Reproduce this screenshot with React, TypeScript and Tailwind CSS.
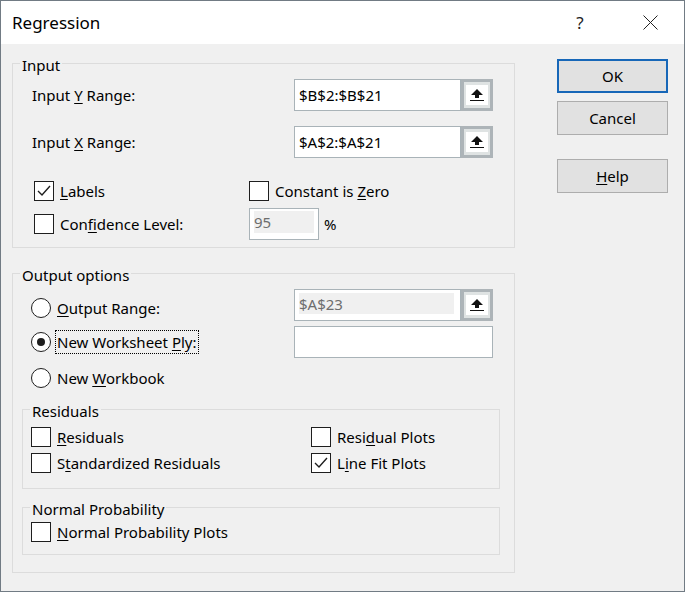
import React from "react";

function U({ children }: { children: React.ReactNode }) {
  return <span className="underline decoration-1 underline-offset-[2px]">{children}</span>;
}

function Check({ checked = false }: { checked?: boolean }) {
  return (
    <span className="flex h-[20px] w-[20px] shrink-0 items-center justify-center border border-[#1e1e1e] bg-white">
      {checked && (
        <svg width="18" height="18" viewBox="0 0 18 18">
          <path d="M3 9 L7 13 L15 4" fill="none" stroke="#1e1e1e" strokeWidth="1.4" />
        </svg>
      )}
    </span>
  );
}

function Radio({ on = false }: { on?: boolean }) {
  return (
    <span className="flex h-[20px] w-[20px] shrink-0 items-center justify-center rounded-full border-[1.5px] border-[#1e1e1e] bg-white">
      {on && <span className="h-[8px] w-[8px] rounded-full bg-[#1e1e1e]" />}
    </span>
  );
}

function PickButton() {
  return (
    <span className="flex h-[32px] w-[32px] shrink-0 items-center justify-center border-[3px] border-[#adb4b8] bg-[#dfe3e3]">
      <span className="flex h-[20px] w-[22px] items-center justify-center bg-white">
        <svg width="14" height="14" viewBox="0 0 14 14">
          <path d="M7 1 L13 7 L9 7 L9 10 L5 10 L5 7 L1 7 Z" fill="#111" />
          <rect x="0" y="12" width="14" height="1" fill="#111" />
        </svg>
      </span>
    </span>
  );
}

function RangeBox({ value, disabled = false }: { value: string; disabled?: boolean }) {
  return (
    <span className="flex h-[32px] w-[199px] shrink-0">
      {disabled ? (
        <span className="flex w-[167px] border border-[#a9b3b8] bg-white pb-[6px] pl-[4px] pr-[6px] pt-[3px]">
          <span className="flex flex-1 items-center bg-[#f0f0f0] text-[#6d6d6d]">{value}</span>
        </span>
      ) : (
        <span className="flex w-[167px] items-center border border-[#a9b3b8] bg-white pl-[4px] text-black">
          {value}
        </span>
      )}
      <PickButton />
    </span>
  );
}

function Group({
  title,
  className,
  children,
}: {
  title: string;
  className: string;
  children: React.ReactNode;
}) {
  return (
    <fieldset className={`m-0 border border-[#dcdcdc] p-0 ${className}`}>
      <legend className="ml-[7px] px-[2px] pt-[4px] text-[15px] leading-[20px]">{title}</legend>
      {children}
    </fieldset>
  );
}

function DlgButton({
  children,
  primary = false,
  className = "",
}: {
  children: React.ReactNode;
  primary?: boolean;
  className?: string;
}) {
  return (
    <button
      className={`flex h-[34px] w-[111px] items-center justify-center bg-[#e1e1e1] text-[15px] text-black ${
        primary ? "border-2 border-[#1767b8]" : "border border-[#adadad]"
      } ${className}`}
    >
      {children}
    </button>
  );
}

export default function App() {
  return (
    <div className="flex h-[592px] w-[685px] flex-col border border-[#717b84] bg-[#f0f0f0] font-['Noto_Sans',sans-serif] text-[15px] leading-[20px] text-black">
      {/* title bar */}
      <div className="flex h-[43px] items-center bg-white pl-[11px] pr-[19px]">
        <span className="text-[17px]">Regression</span>
        <span className="ml-auto flex w-[30px] justify-center text-[17px] text-[#222]">?</span>
        <span className="ml-[40px] flex w-[30px] justify-center">
          <svg width="15" height="15" viewBox="0 0 15 15">
            <path d="M0.5 0.5 L14.5 14.5 M14.5 0.5 L0.5 14.5" stroke="#222" strokeWidth="1" />
          </svg>
        </span>
      </div>

      <div className="flex flex-1 pl-[11px] pt-[7px]">
        <div className="flex w-[503px] flex-col">
          <Group title="Input" className="w-[503px]">
            <div className="pb-[7px] pl-[19px] pt-[4px]">
              <div className="flex h-[32px] items-center">
                <span className="w-[262px]">
                  Input <U>Y</U> Range:
                </span>
                <RangeBox value="$B$2:$B$21" />
              </div>
              <div className="mt-[15px] flex h-[32px] items-center">
                <span className="w-[262px]">
                  Input <U>X</U> Range:
                </span>
                <RangeBox value="$A$2:$A$21" />
              </div>
              <div className="mt-[23px] flex h-[20px] items-center pl-[2px]">
                <span className="flex w-[215px] items-center gap-[6px]">
                  <Check checked />
                  <span>
                    <U>L</U>abels
                  </span>
                </span>
                <span className="flex items-center gap-[6px]">
                  <Check />
                  <span>
                    Constant is <U>Z</U>ero
                  </span>
                </span>
              </div>
              <div className="mt-[7px] flex h-[32px] items-center pl-[2px]">
                <span className="flex w-[215px] items-center gap-[6px]">
                  <Check />
                  <span>
                    Con<U>f</U>idence Level:
                  </span>
                </span>
                <span className="flex h-[32px] w-[70px] border border-[#a9b3b8] bg-white px-[4px] pb-[6px] pt-[2px]">
                  <span className="flex flex-1 items-center bg-[#f0f0f0] text-[#6d6d6d]">95</span>
                </span>
                <span className="ml-[5px]">%</span>
              </div>
            </div>
          </Group>

          <Group title="Output options" className="mt-[13px] w-[503px]">
            <div className="pb-[17px] pl-[9px] pt-[4px]">
              <div className="flex h-[32px] pl-[9px]">
                <span className="flex w-[263px] items-center gap-[6px] self-start pt-[9px]">
                  <Radio />
                  <span>
                    <U>O</U>utput Range:
                  </span>
                </span>
                <RangeBox value="$A$23" disabled />
              </div>
              <div className="mt-[5px] flex h-[32px] items-center pl-[9px]">
                <span className="flex w-[263px] items-center gap-[4px]">
                  <Radio on />
                  <span className="flex h-[24px] items-center border border-dotted border-black px-[1px]">
                    <span>
                      New Worksheet <U>P</U>ly:
                    </span>
                  </span>
                </span>
                <span className="h-[32px] w-[199px] border border-[#a9b3b8] bg-white" />
              </div>
              <div className="mt-[10px] flex h-[20px] items-center gap-[6px] pl-[9px]">
                <Radio />
                <span>
                  New <U>W</U>orkbook
                </span>
              </div>

              <Group title="Residuals" className="mt-[9px] w-[478px]">
                <div className="pb-[15px] pl-[8px] pt-[6px]">
                  <div className="flex h-[20px] items-center">
                    <span className="flex w-[280px] items-center gap-[6px]">
                      <Check />
                      <span>
                        <U>R</U>esiduals
                      </span>
                    </span>
                    <span className="flex items-center gap-[6px]">
                      <Check />
                      <span>
                        Resi<U>d</U>ual Plots
                      </span>
                    </span>
                  </div>
                  <div className="mt-[6px] flex h-[20px] items-center">
                    <span className="flex w-[280px] items-center gap-[6px]">
                      <Check />
                      <span>
                        S<U>t</U>andardized Residuals
                      </span>
                    </span>
                    <span className="flex items-center gap-[6px]">
                      <Check checked />
                      <span>
                        L<U>i</U>ne Fit Plots
                      </span>
                    </span>
                  </div>
                </div>
              </Group>

              <Group title="Normal Probability" className="mt-[6px] w-[478px]">
                <div className="pb-[12px] pl-[8px] pt-[3px]">
                  <div className="flex h-[20px] items-center gap-[6px]">
                    <Check />
                    <span>
                      <U>N</U>ormal Probability Plots
                    </span>
                  </div>
                </div>
              </Group>
            </div>
          </Group>
        </div>

        <div className="ml-[42px] mt-[8px] flex flex-col">
          <DlgButton primary>OK</DlgButton>
          <DlgButton className="mt-[8px]">Cancel</DlgButton>
          <DlgButton className="mt-[24px]">
            <span>
              <U>H</U>elp
            </span>
          </DlgButton>
        </div>
      </div>
    </div>
  );
}
